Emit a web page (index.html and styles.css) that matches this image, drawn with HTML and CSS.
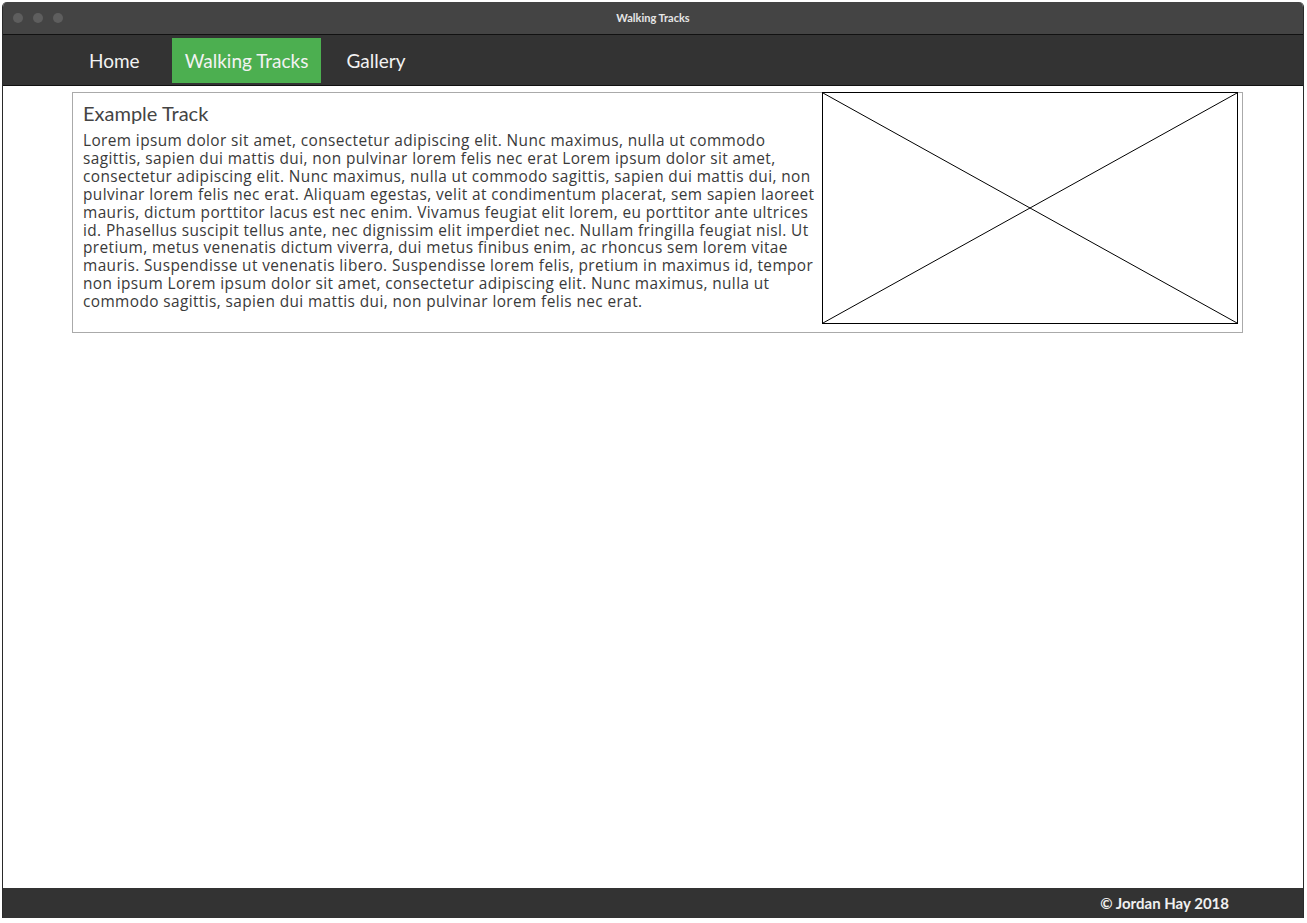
FILE: index.html
```html
<!DOCTYPE html>
<html>
<head>
<meta charset="utf-8">
<title>Walking Tracks</title>
<link rel="stylesheet" href="styles.css">
</head>
<body>
<div class="window">
  <div class="titlebar">
    <div class="lights"><span class="light"></span><span class="light"></span><span class="light"></span></div>
    <div class="title">Walking Tracks</div>
  </div>
  <nav class="nav">
    <a class="nav-link nav-home" href="#">Home</a>
    <a class="nav-link active" href="#">Walking Tracks</a>
    <a class="nav-link nav-gallery" href="#">Gallery</a>
  </nav>
  <main class="main">
    <section class="card">
      <div class="card-text">
        <h2 class="card-title">Example Track</h2>
        <p class="card-body">Lorem ipsum dolor sit amet, consectetur adipiscing elit. Nunc maximus, nulla ut commodo sagittis, sapien dui mattis dui, non pulvinar lorem felis nec erat Lorem ipsum dolor sit amet, consectetur adipiscing elit. Nunc maximus, nulla ut commodo sagittis, sapien dui mattis dui, non pulvinar lorem felis nec erat. Aliquam egestas, velit at condimentum placerat, sem sapien laoreet mauris, dictum porttitor lacus est nec enim. Vivamus feugiat elit lorem, eu porttitor ante ultrices id. Phasellus suscipit tellus ante, nec dignissim elit imperdiet nec. Nullam fringilla feugiat nisl. Ut pretium, metus venenatis dictum viverra, dui metus finibus enim, ac rhoncus sem lorem vitae mauris. Suspendisse ut venenatis libero. Suspendisse lorem felis, pretium in maximus id, tempor non ipsum Lorem ipsum dolor sit amet, consectetur adipiscing elit. Nunc maximus, nulla ut commodo sagittis, sapien dui mattis dui, non pulvinar lorem felis nec erat.</p>
      </div>
      <div class="placeholder">
        <svg class="cross" viewBox="0 0 414 230" preserveAspectRatio="none" width="414" height="230">
          <line x1="0" y1="0" x2="414" y2="230" stroke="#000" stroke-width="1"/>
          <line x1="0" y1="230" x2="414" y2="0" stroke="#000" stroke-width="1"/>
        </svg>
      </div>
    </section>
  </main>
  <footer class="footer">© Jordan Hay 2018</footer>
</div>
</body>
</html>
```

FILE: styles.css
```css
* { box-sizing: border-box; }
html, body { margin: 0; padding: 0; background: #fff; }
body { font-family: Lato, "Open Sans", sans-serif; }

.window {
  margin: 2px 0 0 2px;
  width: 1302px;
  height: 916px;
  display: flex;
  flex-direction: column;
  border-left: 1px solid #2a2a2a;
  border-right: 1px solid #2a2a2a;
  border-radius: 5px 5px 0 0;
  overflow: hidden;
  background: #fff;
}

.titlebar {
  height: 33px;
  flex: none;
  background: #444;
  border-bottom: 1px solid #111;
  display: flex;
  align-items: center;
  position: relative;
}
.lights { display: flex; gap: 10px; padding-left: 10px; }
.light { width: 10px; height: 10px; border-radius: 50%; background: #5e5e5e; }
.title {
  position: absolute;
  left: 0; right: 0; top: 9px;
  text-align: center;
  font-size: 11px;
  font-weight: 700;
  color: #e6e6e6;
}

.nav {
  flex: none;
  height: 51px;
  background: #333;
  border-bottom: 1px solid #111;
  display: flex;
  align-items: center;
  padding-left: 73px;
}
.nav-link {
  display: block;
  height: 45px;
  line-height: 45px;
  padding: 0 13px;
  color: #f2f2f2;
  text-decoration: none;
  font-size: 19px;
}
.nav-home { margin-right: 19px; }
.nav-gallery { margin-left: 12px; }
.nav-link.active { background: #4caf50; }

.main { flex: 1; padding: 6px 60px 0 69px; }

.card {
  border: 1px solid #aaa;
  display: flex;
  align-items: flex-start;
  height: 241px;
}
.card-text { flex: 1; padding: 8px 7px 0 10px; color: #3c3c3c; }
.card-title { margin: 0 0 7px; font-size: 20px; font-weight: 400; line-height: 24px; color: #444; }
.card-body {
  margin: 0;
  font-family: "Open Sans", Lato, sans-serif;
  font-size: 15.4px;
  letter-spacing: 0.4px;
  line-height: 17.9px;
  color: #3a3a3a;
}

.placeholder {
  flex: none;
  width: 416px;
  height: 232px;
  margin: -1px 4px 0 0;
  border: 1px solid #000;
  background: #fff;
}
.cross { display: block; width: 100%; height: 100%; }

.footer {
  flex: none;
  height: 30px;
  background: #333;
  color: #f0f0f0;
  font-size: 15px;
  font-weight: 700;
  text-align: right;
  line-height: 30px;
  padding-right: 74px;
}
```
